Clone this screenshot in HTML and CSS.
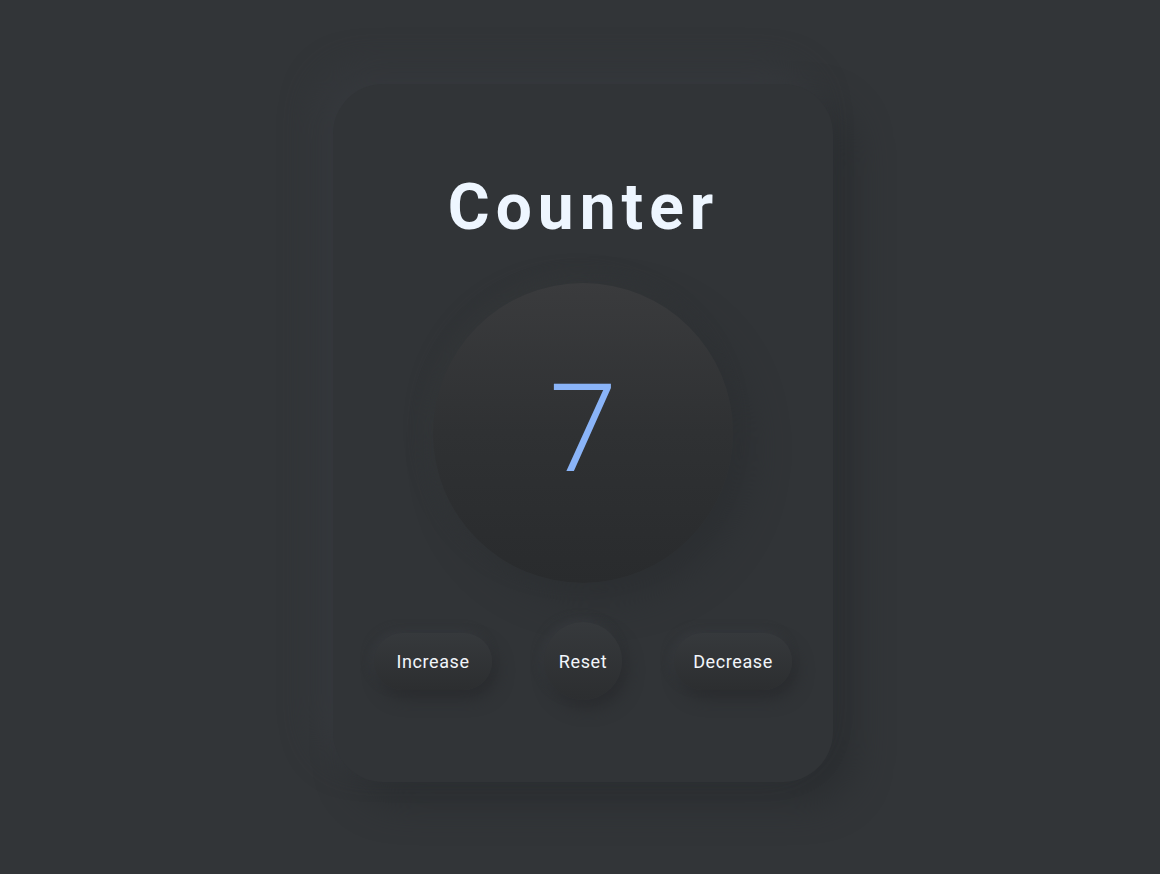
FILE: index.html
```html
<!DOCTYPE html>
<html lang="en">
<head>
<meta charset="utf-8">
<title>Counter</title>
<link rel="stylesheet" href="styles.css">
</head>
<body>
<main class="card">
  <h1 class="title">Counter</h1>
  <div class="dial"><span class="value">7</span></div>
  <div class="controls">
    <button class="btn pill">Increase</button>
    <button class="btn round">Reset</button>
    <button class="btn pill">Decrease</button>
  </div>
</main>
</body>
</html>
```
FILE: styles.css
```css
html, body {
  margin: 0;
  height: 100%;
}
body {
  background: #323538;
  display: flex;
  justify-content: center;
  align-items: flex-start;
  padding: 84px 0 0 6px;
  box-sizing: border-box;
  font-family: Roboto, "Liberation Sans", sans-serif;
}
.card {
  width: 500px;
  height: 698px;
  border-radius: 50px;
  background: #313437;
  box-shadow: -18px -18px 32px #35383c, 20px 20px 36px #2b2e31;
  display: flex;
  flex-direction: column;
  align-items: center;
  box-sizing: border-box;
  padding-top: 86px;
}
.title {
  margin: 0;
  color: #eef6ff;
  font-size: 64px;
  font-weight: 700;
  letter-spacing: 6px;
  line-height: 75px;
  padding-left: 1px;
}
.dial {
  margin-top: 38px;
  width: 300px;
  height: 300px;
  border-radius: 50%;
  background: linear-gradient(180deg, #3a3b3d 0%, #2f3133 50%, #292b2d 100%);
  box-shadow: 16px 16px 36px #2c2f32, -6px -6px 20px #343739;
  display: flex;
  align-items: center;
  justify-content: center;
}
.value {
  color: #8ab4f8;
  font-size: 122px;
  font-weight: 300;
  line-height: 1;
  margin-top: -6px;
}
.controls {
  margin-top: 39px;
  width: 418px;
  display: flex;
  align-items: center;
  justify-content: space-between;
}
.btn {
  border: none;
  color: #f2f6fb;
  font-family: Roboto, "Liberation Sans", sans-serif;
  font-size: 18px;
  letter-spacing: 0.6px;
  background: linear-gradient(180deg, #36393c 0%, #2c2e30 100%);
  box-shadow: 5px 9px 16px #2a2c2f, -3px -3px 10px #36393d;
  padding: 0;
}
.pill {
  width: 118px;
  height: 57px;
  border-radius: 29px;
}
.round {
  width: 78px;
  height: 78px;
  border-radius: 50%;
}
```
